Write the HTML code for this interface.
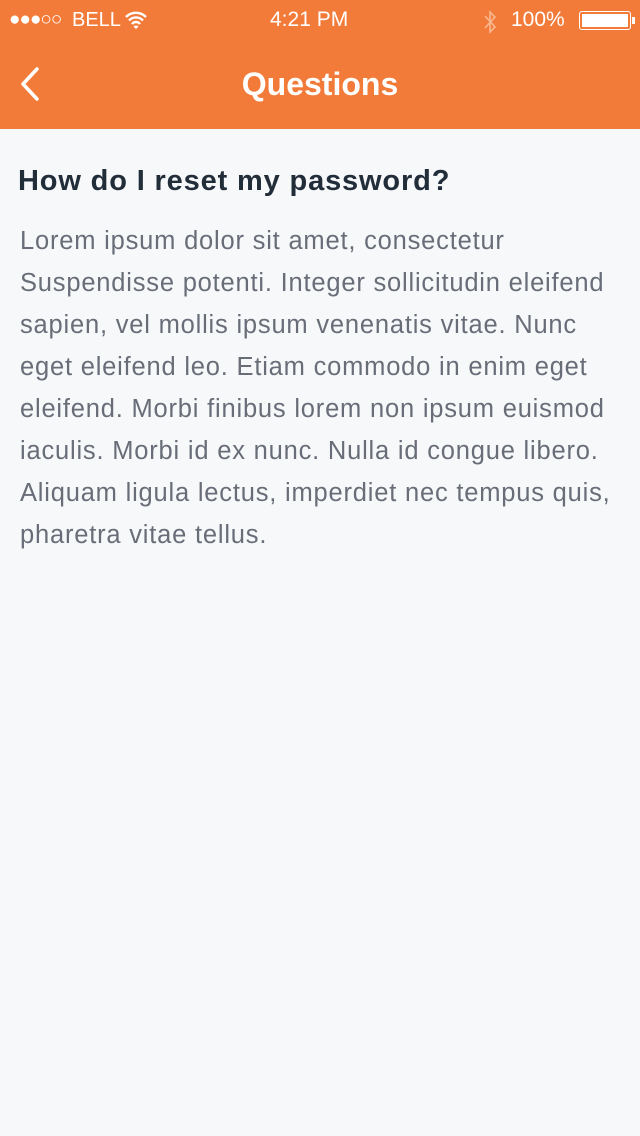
<!DOCTYPE html>
<html><head><meta charset="utf-8"><style>
*{margin:0;padding:0;box-sizing:border-box}
body{width:640px;height:1136px;background:#f7f8fa;font-family:"Liberation Sans",sans-serif;position:relative;overflow:hidden}
.hdr{position:absolute;left:0;top:0;width:640px;height:129px;background:#f37b3a;color:#fff}
.sb{position:absolute;top:8px;font-size:21px;white-space:nowrap}
.title{position:absolute;top:66px;left:0;width:640px;text-align:center;font-size:32px;font-weight:bold}
h1{position:absolute;left:18px;top:165px;font-size:29px;font-weight:bold;color:#222d3a;letter-spacing:0.85px;white-space:nowrap}
p{position:absolute;left:20px;top:220px;width:620px;font-size:25.5px;line-height:42px;color:#686d78;white-space:nowrap;letter-spacing:0.8px}
</style></head><body>
<div class="hdr">
<div class="sb" style="left:9px;font-size:19px;top:9px;letter-spacing:-1px">●●●○○</div>
<div class="sb" style="left:72px;top:9px;font-size:20px">BELL</div>
<svg style="position:absolute;left:124px;top:10px" width="24" height="20" viewBox="0 0 24 20"><path d="M2 7a14 14 0 0 1 20 0M5 10.5a9.5 9.5 0 0 1 14 0M8 14a5 5 0 0 1 8 0" stroke="#fff" stroke-width="2.4" fill="none"/><path d="M9.5 16.5L12 19l2.5-2.5a3.5 3.5 0 0 0-5 0z" fill="#fff"/></svg>
<div class="sb" style="left:270px">4:21 PM</div>
<svg style="position:absolute;left:482px;top:10px" width="16" height="24" viewBox="0 0 16 24"><path d="M3 6l10 11-5 5V2l5 5L3 18" stroke="#f9b88f" stroke-width="1.6" fill="none"/></svg>
<div class="sb" style="left:511px">100%</div>
<div style="position:absolute;left:579px;top:11px;width:52px;height:19px;border:1.5px solid #fff;border-radius:3px;padding:2px"><div style="background:#fff;width:100%;height:100%"></div></div>
<div style="position:absolute;left:632px;top:17px;width:3px;height:7px;background:#fff"></div>
<svg style="position:absolute;left:18px;top:66px" width="24" height="36" viewBox="0 0 24 36"><path d="M19 3L5 18l14 15" stroke="#fff" stroke-width="3.5" fill="none" stroke-linecap="round" stroke-linejoin="round"/></svg>
<div class="title">Questions</div>
</div>
<h1>How do I reset my password?</h1>
<p>Lorem ipsum dolor sit amet, consectetur<br>Suspendisse potenti. Integer sollicitudin eleifend<br>sapien, vel mollis ipsum venenatis vitae. Nunc<br>eget eleifend leo. Etiam commodo in enim eget<br>eleifend. Morbi finibus lorem non ipsum euismod<br>iaculis. Morbi id ex nunc. Nulla id congue libero.<br>Aliquam ligula lectus, imperdiet nec tempus quis,<br>pharetra vitae tellus.</p>
</body></html>
